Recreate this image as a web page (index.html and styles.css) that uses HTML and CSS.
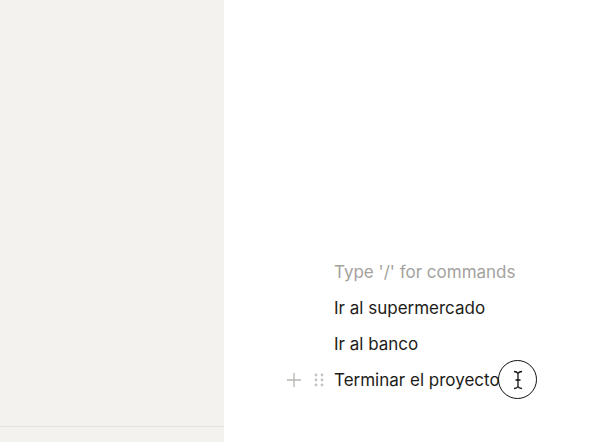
FILE: index.html
```html
<!DOCTYPE html>
<html lang="es">

<head>
    <meta charset="UTF-8">
    <meta name="viewport" content="width=device-width, initial-scale=1.0">
    <title>Notas</title>
    <link rel="stylesheet" href="styles.css">
</head>

<body>
    <div class="app">
        <aside class="sidebar">
            <div class="sidebar-foot"></div>
        </aside>
        <main class="page">
            <div class="blocks">
                <div class="block">
                    <span class="placeholder">Type '/' for commands</span>
                </div>
                <div class="block">Ir al supermercado</div>
                <div class="block">Ir al banco</div>
                <div class="block active">
                    <div class="handles">
                        <svg class="plus" width="16" height="16" viewBox="0 0 16 16">
                            <path d="M8 1v14M1 8h14" stroke="#b9b8b4" stroke-width="1.4" fill="none" />
                        </svg>
                        <svg class="drag" width="10" height="16" viewBox="0 0 10 16">
                            <circle cx="2" cy="3" r="1.4" />
                            <circle cx="8" cy="3" r="1.4" />
                            <circle cx="2" cy="8" r="1.4" />
                            <circle cx="8" cy="8" r="1.4" />
                            <circle cx="2" cy="13" r="1.4" />
                            <circle cx="8" cy="13" r="1.4" />
                        </svg>
                    </div>
                    <span class="text">Terminar el proyecto</span>
                    <span class="cursor">
                        <svg width="12" height="20" viewBox="0 0 12 20">
                            <path d="M2 1.5c2 0 3.2 0.6 4 1.8c0.8-1.2 2-1.8 4-1.8M6 3.3v13.4M2 18.5c2 0 3.2-0.6 4-1.8c0.8 1.2 2 1.8 4 1.8M3.5 10h5" stroke="#111" stroke-width="1.3" fill="none" />
                        </svg>
                    </span>
                </div>
            </div>
        </main>
    </div>
</body>

</html>
```

FILE: styles.css
```css
body {
    margin: 0;
    padding: 0;
    font-family: Inter, "Liberation Sans", sans-serif;
    color: #37352f;
    background: #ffffff;
}

.app {
    display: flex;
    height: 442px;
    overflow: hidden;
}

.sidebar {
    width: 224px;
    flex-shrink: 0;
    background: #f3f2ee;
    display: flex;
    flex-direction: column;
    justify-content: flex-end;
}

.sidebar-foot {
    height: 15px;
    border-top: 1px solid #e4e3df;
}

.page {
    flex: 1;
    display: flex;
    flex-direction: column;
    justify-content: flex-end;
    padding-bottom: 49px;
}

.blocks {
    display: flex;
    flex-direction: column;
    gap: 11px;
    padding-left: 110px;
}

.block {
    position: relative;
    font-size: 17px;
    line-height: 25px;
    color: #1d1c19;
}

.placeholder {
    color: #a3a29e;
}

.handles {
    position: absolute;
    left: -48px;
    top: 4px;
    display: flex;
    align-items: center;
    gap: 12px;
}

.drag circle {
    fill: #c4c3bf;
}

.cursor {
    position: absolute;
    left: 164px;
    top: -8px;
    width: 37px;
    height: 37px;
    border: 1.5px solid #111;
    border-radius: 50%;
    display: flex;
    align-items: center;
    justify-content: center;
}
```
